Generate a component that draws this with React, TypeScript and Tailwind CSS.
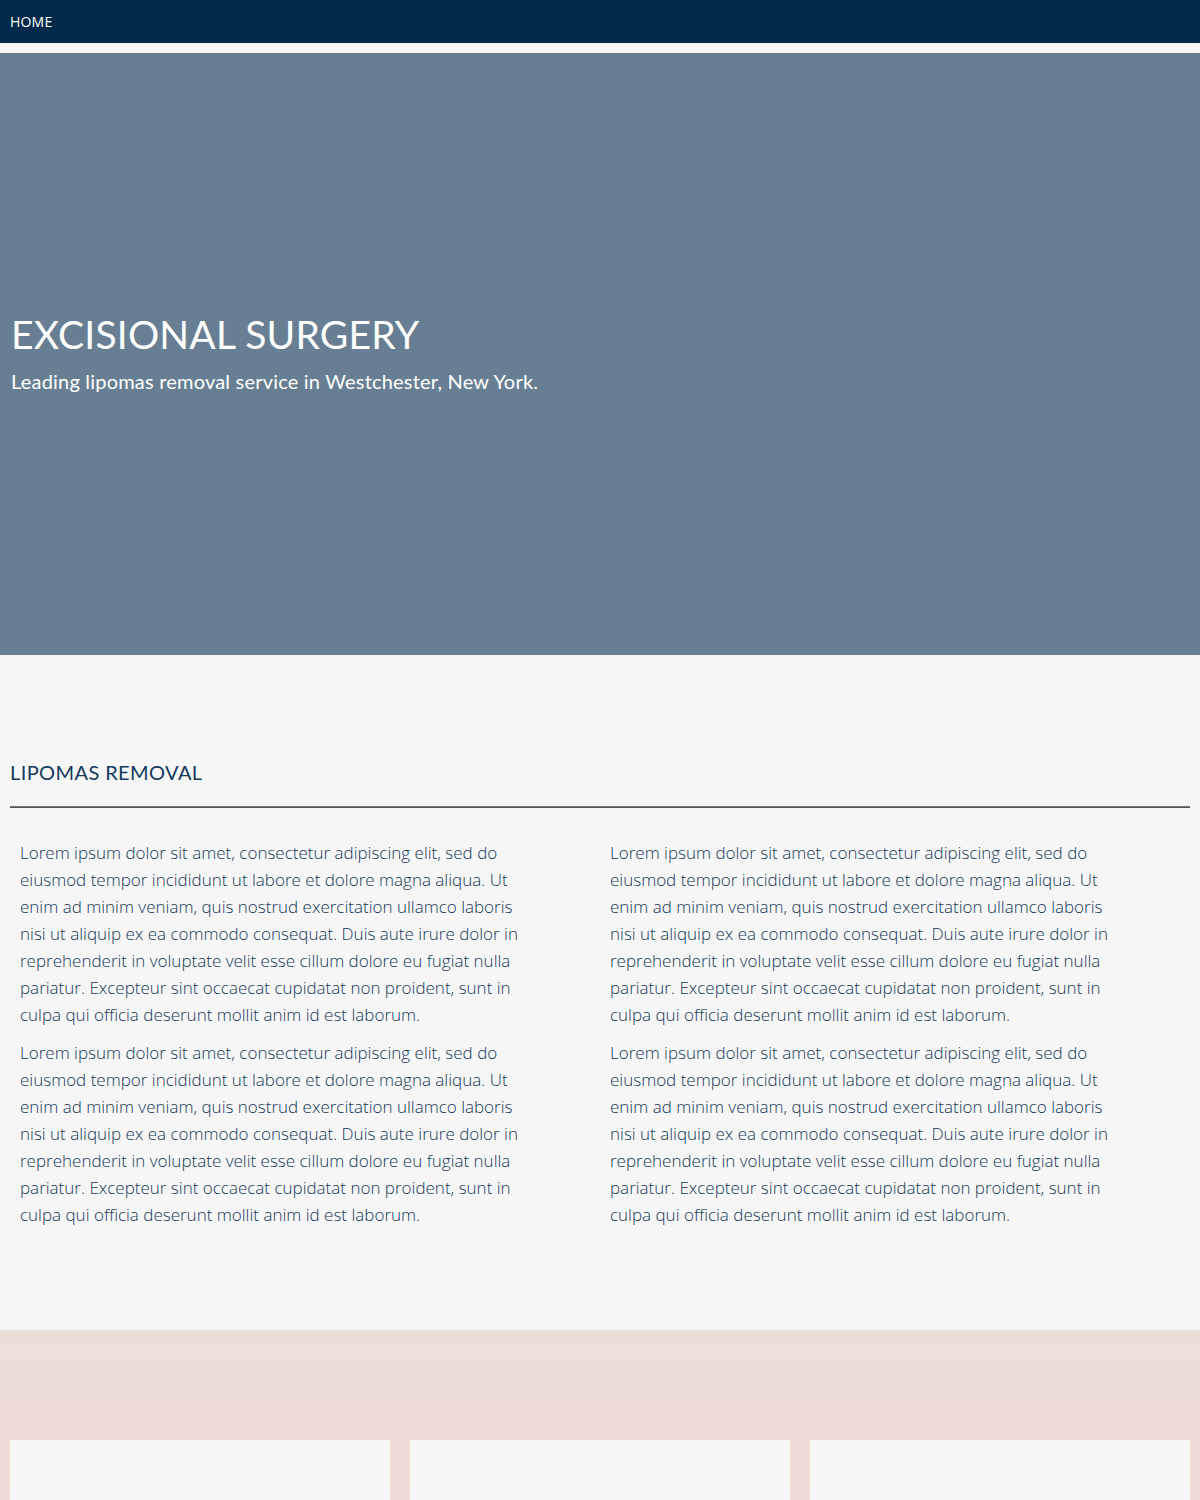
import React from 'react';

const lorem =
  'Lorem ipsum dolor sit amet, consectetur adipiscing elit, sed do eiusmod tempor incididunt ut labore et dolore magna aliqua. Ut enim ad minim veniam, quis nostrud exercitation ullamco laboris nisi ut aliquip ex ea commodo consequat. Duis aute irure dolor in reprehenderit in voluptate velit esse cillum dolore eu fugiat nulla pariatur. Excepteur sint occaecat cupidatat non proident, sunt in culpa qui officia deserunt mollit anim id est laborum.';

function Column() {
  return (
    <div className="px-[10px]">
      <div className="w-[512px] flex flex-col gap-[11px] text-[17px] leading-[27px] font-light text-[#143858]">
        <p>{lorem}</p>
        <p>{lorem}</p>
      </div>
    </div>
  );
}

export default function App() {
  return (
    <div className="min-h-[1500px] bg-[#f6f6f6] font-['Open_Sans',sans-serif]">
      {/* top bar */}
      <nav className="h-[43px] bg-[#022a4b] flex items-center px-[10px]">
        <a className="text-white text-[14px] tracking-[0.2px]">HOME</a>
      </nav>

      <div className="h-[10px]" />

      {/* hero */}
      <header className="h-[602px] bg-[#687f93] flex flex-col justify-center px-[11px] pb-[4px] text-white">
        <h1 className="font-['Lato',sans-serif] text-[39px] leading-[48px] tracking-[0.2px]">EXCISIONAL SURGERY</h1>
        <p className="font-['Lato',sans-serif] text-[20px] leading-[26px] tracking-[0.2px] mt-[10px]">
          Leading lipomas removal service in Westchester, New York.
        </p>
      </header>

      {/* content */}
      <section className="pt-[104px] pb-[102px] px-[10px]">
        <h2 className="font-['Lato',sans-serif] text-[20px] text-[#12395c] tracking-[0.4px] leading-[26px]">LIPOMAS REMOVAL</h2>
        <div className="mt-[21px] h-[2px] bg-[#555555] border-t border-[#777777]" />
        <div className="mt-[31px] grid grid-cols-2">
          <Column />
          <Column />
        </div>
      </section>

      {/* cards band */}
      <section className="bg-gradient-to-b from-[#ecdfd9] via-[#efddd7] to-[#eedcda] pt-[110px] px-[10px]">
        <div className="grid grid-cols-3 gap-[20px]">
          <div className="h-[70px] bg-[#f6f6f6]" />
          <div className="h-[70px] bg-[#f6f6f6]" />
          <div className="h-[70px] bg-[#f6f6f6]" />
        </div>
      </section>
    </div>
  );
}
